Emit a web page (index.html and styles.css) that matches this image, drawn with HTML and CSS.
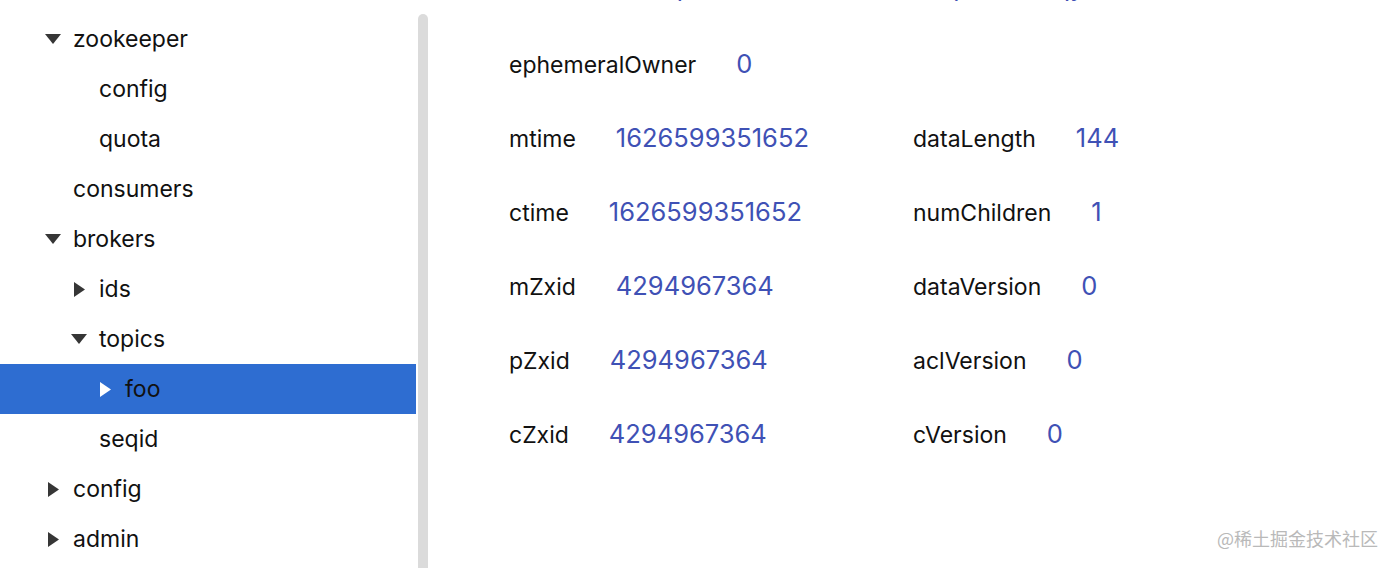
FILE: index.html
```html
<!DOCTYPE html>
<html>
<head>
<meta charset="utf-8">
<link rel="stylesheet" href="styles.css">
</head>
<body>
<div class="app">
  <div class="sidebar">
    <ul class="tree">
      <li class="node lvl0"><span class="tw"><svg class="down" viewBox="0 0 16 10"><polygon points="0,0 16,0 8,10"/></svg></span><span class="name">/</span></li>
      <li class="node lvl1"><span class="tw"><svg class="down" viewBox="0 0 16 10"><polygon points="0,0 16,0 8,10"/></svg></span><span class="name">zookeeper</span></li>
      <li class="node lvl2"><span class="tw"></span><span class="name">config</span></li>
      <li class="node lvl2"><span class="tw"></span><span class="name">quota</span></li>
      <li class="node lvl1"><span class="tw"></span><span class="name">consumers</span></li>
      <li class="node lvl1"><span class="tw"><svg class="down" viewBox="0 0 16 10"><polygon points="0,0 16,0 8,10"/></svg></span><span class="name">brokers</span></li>
      <li class="node lvl2"><span class="tw"><svg class="right" viewBox="0 0 11 15"><polygon points="0,0 11,7.5 0,15"/></svg></span><span class="name">ids</span></li>
      <li class="node lvl2"><span class="tw"><svg class="down" viewBox="0 0 16 10"><polygon points="0,0 16,0 8,10"/></svg></span><span class="name">topics</span></li>
      <li class="node lvl3 selected"><span class="tw"><svg class="right" viewBox="0 0 11 15"><polygon points="0,0 11,7.5 0,15"/></svg></span><span class="name">foo</span></li>
      <li class="node lvl2"><span class="tw"></span><span class="name">seqid</span></li>
      <li class="node lvl1"><span class="tw"><svg class="right" viewBox="0 0 11 15"><polygon points="0,0 11,7.5 0,15"/></svg></span><span class="name">config</span></li>
      <li class="node lvl1"><span class="tw"><svg class="right" viewBox="0 0 11 15"><polygon points="0,0 11,7.5 0,15"/></svg></span><span class="name">admin</span></li>
    </ul>
    <div class="scrolltrack"><div class="thumb"></div></div>
  </div>
  <div class="details">
    <div class="datarow"><span class="value">{"version":1,"partitions":{"0":[0]},"topic_id":"qy"}</span></div>
    <div class="stats">
      <div class="stat"><span class="label">ephemeralOwner</span><span class="value">0</span></div>
      <div class="stat"></div>
      <div class="stat"><span class="label">mtime</span><span class="value">1626599351652</span></div>
      <div class="stat"><span class="label">dataLength</span><span class="value">144</span></div>
      <div class="stat"><span class="label">ctime</span><span class="value">1626599351652</span></div>
      <div class="stat"><span class="label">numChildren</span><span class="value">1</span></div>
      <div class="stat"><span class="label">mZxid</span><span class="value">4294967364</span></div>
      <div class="stat"><span class="label">dataVersion</span><span class="value">0</span></div>
      <div class="stat"><span class="label">pZxid</span><span class="value">4294967364</span></div>
      <div class="stat"><span class="label">aclVersion</span><span class="value">0</span></div>
      <div class="stat"><span class="label">cZxid</span><span class="value">4294967364</span></div>
      <div class="stat"><span class="label">cVersion</span><span class="value">0</span></div>
    </div>
  </div>
  <div class="watermark">@稀土掘金技术社区</div>
</div>
</body>
</html>
```
FILE: styles.css
```css
html, body {
  margin: 0;
  padding: 0;
  background: #ffffff;
}
body {
  font-family: Inter, "Noto Sans CJK SC", sans-serif;
  color: #111111;
}
.app {
  position: relative;
  display: flex;
  width: 1396px;
  height: 568px;
  overflow: hidden;
}
.sidebar {
  display: flex;
  flex: 0 0 430px;
  height: 568px;
  overflow: hidden;
}
.tree {
  list-style: none;
  margin: -36px 0 0 0;
  padding: 0;
  width: 416px;
  flex: 0 0 416px;
}
.node {
  display: flex;
  align-items: center;
  height: 50px;
  font-size: 23px;
  color: #111111;
}
.node.lvl0 { padding-left: 19px; }
.node.lvl1 { padding-left: 45px; }
.node.lvl2 { padding-left: 71px; }
.node.lvl3 { padding-left: 97px; }
.tw {
  display: flex;
  align-items: center;
  justify-content: center;
  width: 16px;
  height: 16px;
  margin-right: 12px;
  flex: 0 0 16px;
}
.tw svg { fill: #363636; display: block; }
.tw svg.down { width: 16px; height: 10px; }
.tw svg.right { width: 11px; height: 15px; }
.node.selected {
  background: #2e6dd1;
}
.node.selected .tw svg { fill: #ffffff; }
.node.selected .name { color: #111111; }
.scrolltrack {
  flex: 0 0 14px;
  padding-left: 2px;
  box-sizing: border-box;
}
.thumb {
  margin-top: 14px;
  width: 10px;
  height: 600px;
  background: #dbdbdb;
  border-radius: 5px;
}
.details {
  flex: 1;
  padding-left: 79px;
  margin-top: -50px;
  font-size: 23px;
}
.datarow {
  height: 77px;
  line-height: 74px;
  white-space: nowrap;
  padding-left: 10px;
}
.stats {
  display: grid;
  grid-template-columns: 404px auto;
  grid-auto-rows: 74px;
}
.stat {
  line-height: 74px;
  white-space: nowrap;
}
.label {
  color: #111111;
}
.value {
  display: inline-block;
  color: #3f51b5;
  margin-left: 40px;
  font-size: 25.5px;
}
.datarow .value { margin-left: 0; }
.watermark {
  position: absolute;
  right: 18px;
  bottom: 17px;
  font-size: 18px;
  color: #b9b9b9;
  font-family: "Noto Sans CJK SC", sans-serif;
}
```
